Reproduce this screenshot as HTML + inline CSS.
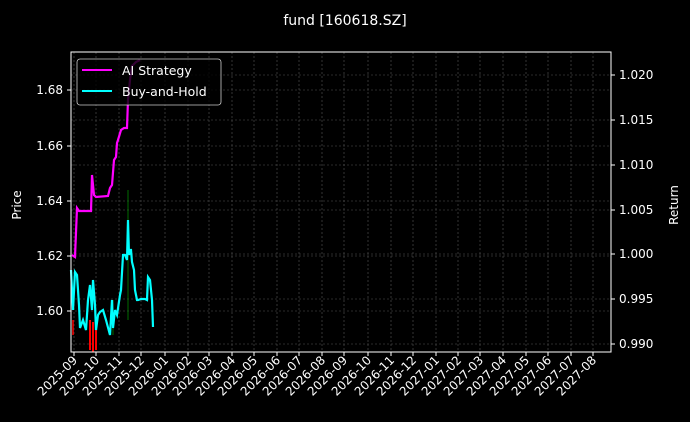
<!DOCTYPE html>
<html><head><meta charset="utf-8"><style>
html,body{margin:0;padding:0;background:#000;}
svg{display:block;font-family:"DejaVu Sans","Liberation Sans",sans-serif;}
</style></head><body>
<svg width="690" height="422" viewBox="0 0 690 422" xmlns="http://www.w3.org/2000/svg">
<rect width="690" height="422" fill="#000"/>
<text x="345" y="25" fill="#fff" font-size="14" text-anchor="middle">fund [160618.SZ]</text>
<g stroke="#555" stroke-width="0.6" stroke-dasharray="2,2">
<line x1="74" y1="52" x2="74" y2="352"/><line x1="96" y1="52" x2="96" y2="352"/><line x1="119" y1="52" x2="119" y2="352"/><line x1="141" y1="52" x2="141" y2="352"/><line x1="165" y1="52" x2="165" y2="352"/><line x1="188" y1="52" x2="188" y2="352"/><line x1="209" y1="52" x2="209" y2="352"/><line x1="232" y1="52" x2="232" y2="352"/><line x1="254" y1="52" x2="254" y2="352"/><line x1="277" y1="52" x2="277" y2="352"/><line x1="299" y1="52" x2="299" y2="352"/><line x1="322" y1="52" x2="322" y2="352"/><line x1="344" y1="52" x2="344" y2="352"/><line x1="368" y1="52" x2="368" y2="352"/><line x1="391" y1="52" x2="391" y2="352"/><line x1="413" y1="52" x2="413" y2="352"/><line x1="436" y1="52" x2="436" y2="352"/><line x1="458" y1="52" x2="458" y2="352"/><line x1="480" y1="52" x2="480" y2="352"/><line x1="503" y1="52" x2="503" y2="352"/><line x1="526" y1="52" x2="526" y2="352"/><line x1="548" y1="52" x2="548" y2="352"/><line x1="571" y1="52" x2="571" y2="352"/><line x1="593" y1="52" x2="593" y2="352"/>
<line x1="71" y1="90" x2="611" y2="90"/><line x1="71" y1="146" x2="611" y2="146"/><line x1="71" y1="201" x2="611" y2="201"/><line x1="71" y1="256" x2="611" y2="256"/><line x1="71" y1="311" x2="611" y2="311"/>
<line x1="71" y1="75" x2="611" y2="75"/><line x1="71" y1="120" x2="611" y2="120"/><line x1="71" y1="165" x2="611" y2="165"/><line x1="71" y1="210" x2="611" y2="210"/><line x1="71" y1="254" x2="611" y2="254"/><line x1="71" y1="299" x2="611" y2="299"/><line x1="71" y1="344" x2="611" y2="344"/>
</g>
<g stroke-width="1.5">
<line x1="90" y1="320" x2="90" y2="350" stroke="#f00" stroke-width="2"/><line x1="93" y1="322" x2="93" y2="352" stroke="#f00" stroke-width="2"/><line x1="96" y1="325" x2="96" y2="350" stroke="#f00" stroke-width="2"/><line x1="73" y1="320" x2="73" y2="335" stroke="#f00"/>
<line x1="128" y1="190" x2="128" y2="320" stroke="#080" stroke-width="0.8"/><line x1="113" y1="300" x2="113" y2="335" stroke="#080" stroke-width="0.8"/>
</g>
<polyline fill="none" stroke="#f0f" stroke-width="2.2" points="72,255 75,257 77,208 79,211 91,211 92,175 94,195 96,197 108,196 110,188 112,185 114,160 116,157 117,143 118,140 121,130 124,128 127,128 128,100 130,80 132,66 136,62 140,60"/>
<polyline fill="none" stroke="#0ff" stroke-width="2.2" points="71,270 73,310 75,272 77,275 79,305 80,328 83,320 86,330 88,300 90,285 92,310 93,280 95,305 96,330 98,315 100,312 103,310 106,320 110,335 112,300 113,328 115,310 117,315 120,295 121,290 123,255 125,255 127,260 128,220 129,255 130,250 131,250 132,262 134,270 135,290 137,300 138,300 141,299 145,299 147,300 148,277 150,280 152,300 153,327"/>
<rect x="71" y="52" width="540" height="300" fill="none" stroke="#fff" stroke-width="1"/>
<rect x="77" y="59" width="144" height="46" rx="3" fill="#000" fill-opacity="0.8" stroke="#ccc" stroke-width="0.8"/>
<line x1="82" y1="70" x2="112" y2="70" stroke="#f0f" stroke-width="2"/>
<line x1="82" y1="91" x2="112" y2="91" stroke="#0ff" stroke-width="2"/>
<text x="122" y="75" fill="#fff" font-size="12.5">AI Strategy</text>
<text x="122" y="96" fill="#fff" font-size="12.5">Buy-and-Hold</text>
<g fill="#fff" font-size="12" text-anchor="end">
<text x="63" y="94">1.68</text><text x="63" y="150">1.66</text><text x="63" y="205">1.64</text><text x="63" y="260">1.62</text><text x="63" y="315">1.60</text>
</g>
<g stroke="#fff" stroke-width="1">
<line x1="67" y1="90" x2="71" y2="90"/><line x1="67" y1="146" x2="71" y2="146"/><line x1="67" y1="201" x2="71" y2="201"/><line x1="67" y1="256" x2="71" y2="256"/><line x1="67" y1="311" x2="71" y2="311"/>
<line x1="611" y1="75" x2="615" y2="75"/><line x1="611" y1="120" x2="615" y2="120"/><line x1="611" y1="165" x2="615" y2="165"/><line x1="611" y1="210" x2="615" y2="210"/><line x1="611" y1="254" x2="615" y2="254"/><line x1="611" y1="299" x2="615" y2="299"/><line x1="611" y1="344" x2="615" y2="344"/>
</g>
<g fill="#fff" font-size="12">
<text x="619" y="79">1.020</text><text x="619" y="124">1.015</text><text x="619" y="169">1.010</text><text x="619" y="214">1.005</text><text x="619" y="258">1.000</text><text x="619" y="303">0.995</text><text x="619" y="348">0.990</text>
</g>
<text transform="translate(21,205) rotate(-90)" fill="#fff" font-size="12" text-anchor="middle">Price</text>
<text transform="translate(678,205) rotate(-90)" fill="#fff" font-size="12" text-anchor="middle">Return</text>
<g stroke="#fff" stroke-width="1">
<line x1="74" y1="352" x2="74" y2="356"/><line x1="96" y1="352" x2="96" y2="356"/><line x1="119" y1="352" x2="119" y2="356"/><line x1="141" y1="352" x2="141" y2="356"/><line x1="165" y1="352" x2="165" y2="356"/><line x1="188" y1="352" x2="188" y2="356"/><line x1="209" y1="352" x2="209" y2="356"/><line x1="232" y1="352" x2="232" y2="356"/><line x1="254" y1="352" x2="254" y2="356"/><line x1="277" y1="352" x2="277" y2="356"/><line x1="299" y1="352" x2="299" y2="356"/><line x1="322" y1="352" x2="322" y2="356"/><line x1="344" y1="352" x2="344" y2="356"/><line x1="368" y1="352" x2="368" y2="356"/><line x1="391" y1="352" x2="391" y2="356"/><line x1="413" y1="352" x2="413" y2="356"/><line x1="436" y1="352" x2="436" y2="356"/><line x1="458" y1="352" x2="458" y2="356"/><line x1="480" y1="352" x2="480" y2="356"/><line x1="503" y1="352" x2="503" y2="356"/><line x1="526" y1="352" x2="526" y2="356"/><line x1="548" y1="352" x2="548" y2="356"/><line x1="571" y1="352" x2="571" y2="356"/><line x1="593" y1="352" x2="593" y2="356"/>
</g>
<g fill="#fff" font-size="12" text-anchor="end">
<text transform="translate(78,361) rotate(-45)">2025-09</text><text transform="translate(100,361) rotate(-45)">2025-10</text><text transform="translate(123,361) rotate(-45)">2025-11</text><text transform="translate(145,361) rotate(-45)">2025-12</text><text transform="translate(169,361) rotate(-45)">2026-01</text><text transform="translate(192,361) rotate(-45)">2026-02</text><text transform="translate(213,361) rotate(-45)">2026-03</text><text transform="translate(236,361) rotate(-45)">2026-04</text><text transform="translate(258,361) rotate(-45)">2026-05</text><text transform="translate(281,361) rotate(-45)">2026-06</text><text transform="translate(303,361) rotate(-45)">2026-07</text><text transform="translate(326,361) rotate(-45)">2026-08</text><text transform="translate(348,361) rotate(-45)">2026-09</text><text transform="translate(372,361) rotate(-45)">2026-10</text><text transform="translate(395,361) rotate(-45)">2026-11</text><text transform="translate(417,361) rotate(-45)">2026-12</text><text transform="translate(440,361) rotate(-45)">2027-01</text><text transform="translate(462,361) rotate(-45)">2027-02</text><text transform="translate(484,361) rotate(-45)">2027-03</text><text transform="translate(507,361) rotate(-45)">2027-04</text><text transform="translate(530,361) rotate(-45)">2027-05</text><text transform="translate(552,361) rotate(-45)">2027-06</text><text transform="translate(575,361) rotate(-45)">2027-07</text><text transform="translate(597,361) rotate(-45)">2027-08</text>
</g>
</svg>
</body></html>
